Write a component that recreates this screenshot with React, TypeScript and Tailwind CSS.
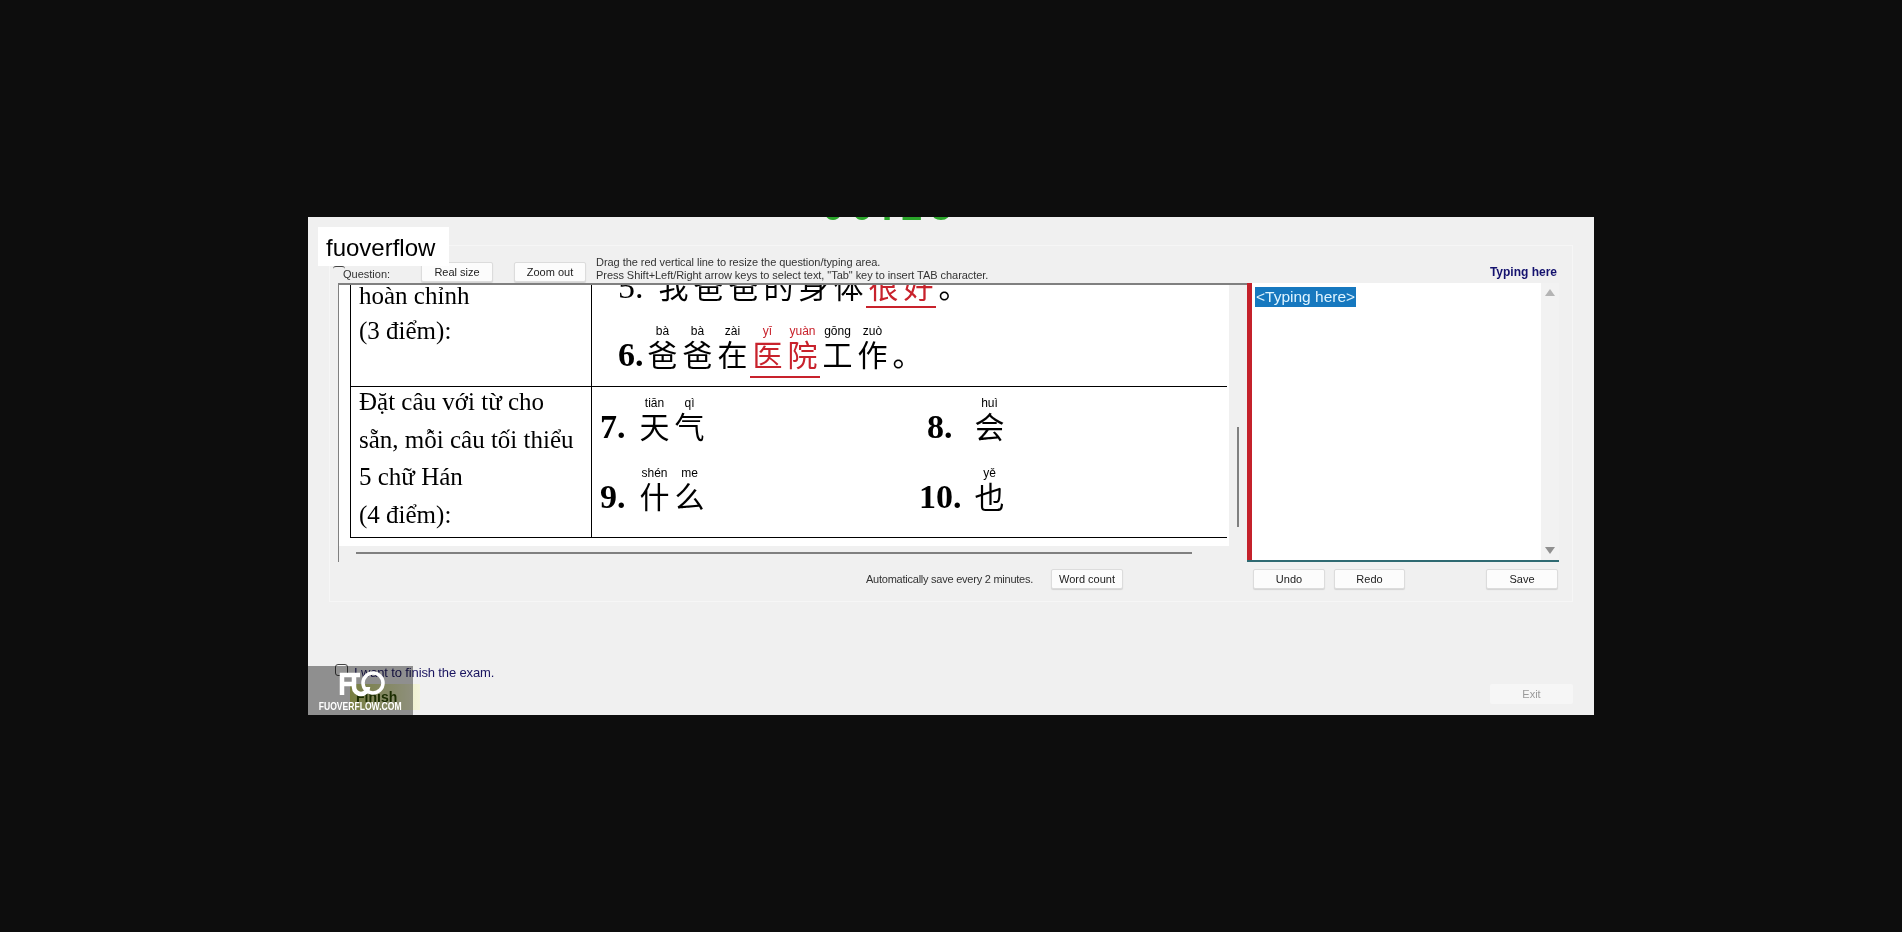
import React from 'react';

const CJK = '"Liberation Serif","Noto Sans CJK SC",serif';

// one hanzi with its pinyin above it
const Han = ({ py, ch, red }: { py?: string; ch: string; red?: boolean }) => (
  <div className={`flex w-[35px] flex-col items-center ${red ? 'text-[#c8222c]' : 'text-black'}`}>
    {py !== undefined && (
      <span className="h-[14px] text-[12px] leading-[14px] font-['Liberation_Sans',sans-serif] whitespace-nowrap">{py}</span>
    )}
    <span className="h-[36px] text-[30px] leading-[30px] font-['Noto_Sans_CJK_SC',serif]">{ch}</span>
  </div>
);

const Num = ({ children, className }: { children: React.ReactNode; className?: string }) => (
  <span className={`h-[36px] text-[34px] leading-[34px] text-black ${className ?? 'font-bold'}`}>{children}</span>
);

const Btn = ({ children, className }: { children: React.ReactNode; className?: string }) => (
  <button className={`h-[20px] rounded-[2px] border border-[#dcdcdc] bg-[#fcfcfc] text-[11px] leading-[18px] text-[#222] shadow-[0_1px_1px_rgba(0,0,0,0.12)] ${className ?? ''}`}>
    {children}
  </button>
);

const App = () => {
  return (
    <div className="h-[932px] w-[1902px] overflow-hidden bg-[#0d0d0d] pt-[217px] pl-[308px] font-['Liberation_Sans',sans-serif]">
      <div className="relative h-[498px] w-[1286px] overflow-hidden bg-[#f0f0f0]">
        {/* timer, cut off by the top edge */}
        <div className="flex h-[3px] items-start justify-center overflow-hidden">
          <span className="mt-[-29px] ml-[-120px] text-[38px] leading-[38px] font-bold tracking-[8px] text-[#2aa52a]">00:25</span>
        </div>

        {/* exam group */}
        <div className="mt-[25px] ml-[21px] h-[357px] w-[1244px] border border-[#f6f6f6] pt-[16px]">
          {/* toolbar */}
          <div className="flex h-[21px] items-start pl-[13px] text-[#333]">
            <span className="mt-[5px] w-[78px] text-[11px] leading-[14px]">Question:</span>
            <Btn className="w-[72px]">Real size</Btn>
            <Btn className="ml-[21px] w-[72px]">Zoom out</Btn>
            <div className="mt-[-6px] ml-[10px] text-[11px] leading-[13px] tracking-[-0.05px] whitespace-nowrap">
              <div>Drag the red vertical line to resize the question/typing area.</div>
              <div>Press Shift+Left/Right arrow keys to select text, "Tab" key to insert TAB character.</div>
            </div>
            <span className="mt-[3px] mr-[15px] ml-auto text-[12px] leading-[14px] font-bold text-[#14126e]">Typing here</span>
          </div>

          <div className="ml-[8px] flex h-[279px]">
            {/* question pane */}
            <div className="flex w-[909px] flex-col border-t-2 border-l border-[#808080]">
              <div className="flex h-[261px]">
                <div className="w-[890px] overflow-hidden bg-white pl-[11px]">
                  <div className="w-[877px] border-b border-l border-black font-['Liberation_Serif',serif] text-[25px] text-black">
                    <div className="flex h-[102px] border-b border-black">
                      <div className="mt-[-7px] w-[241px] border-r border-black pl-[8px] leading-[35px]">
                        <div>hoàn chỉnh</div>
                        <div>(3 điểm):</div>
                      </div>
                      <div className="pl-[26px]" style={{ fontFamily: CJK }}>
                        <div className="mt-[-15px] flex items-end">
                          <Num className="w-[38px] font-normal">5.</Num>
                          <Han ch="我" />
                          <Han ch="爸" />
                          <Han ch="爸" />
                          <Han ch="的" />
                          <Han ch="身" />
                          <Han ch="体" />
                          <div className="mb-[-2px] flex border-b-2 border-[#c8222c]">
                            <Han ch="很" red />
                            <Han ch="好" red />
                          </div>
                          <Han ch="。" />
                        </div>
                        <div className="mt-[18px] flex items-end">
                          <Num className="w-[27px] font-bold">6.</Num>
                          <Han py="bà" ch="爸" />
                          <Han py="bà" ch="爸" />
                          <Han py="zài" ch="在" />
                          <div className="mb-[-4px] flex border-b-2 border-[#c8222c] pb-[2px]">
                            <Han py="yī" ch="医" red />
                            <Han py="yuàn" ch="院" red />
                          </div>
                          <Han py="gōng" ch="工" />
                          <Han py="zuò" ch="作" />
                          <Han ch="。" />
                        </div>
                      </div>
                    </div>
                    <div className="flex h-[150px]">
                      <div className="mt-[-4px] w-[241px] border-r border-black pl-[8px] leading-[37.5px] whitespace-nowrap">
                        <div>Đặt câu với từ cho</div>
                        <div>sẵn, mỗi câu tối thiểu</div>
                        <div>5 chữ Hán</div>
                        <div>(4 điểm):</div>
                      </div>
                      <div className="pt-[9px] pl-[8px]" style={{ fontFamily: CJK }}>
                        <div className="flex items-end">
                          <Num className="w-[37px] font-bold">7.</Num>
                          <Han py="tiān" ch="天" />
                          <Han py="qì" ch="气" />
                          <Num className="ml-[220px] w-[45px] font-bold">8.</Num>
                          <Han py="huì" ch="会" />
                        </div>
                        <div className="mt-[20px] flex items-end">
                          <Num className="w-[37px] font-bold">9.</Num>
                          <Han py="shén" ch="什" />
                          <Han py="me" ch="么" />
                          <Num className="ml-[212px] w-[53px] font-bold">10.</Num>
                          <Han py="yě" ch="也" />
                        </div>
                      </div>
                    </div>
                  </div>
                </div>
                {/* vertical scroll thumb */}
                <div className="flex-1 pt-[142px] pl-[8px]">
                  <div className="h-[100px] w-[2px] bg-[#808080]" />
                </div>
              </div>
              {/* horizontal scroll thumb */}
              <div className="mt-[6px] ml-[17px] h-[2px] w-[836px] bg-[#808080]" />
            </div>

            {/* red splitter */}
            <div className="w-[5px] bg-[#c4212b]" />

            {/* typing pane */}
            <div className="flex w-[307px] flex-col">
              <div className="flex h-[277px] bg-white">
                <div className="flex-1 pt-[2px] pl-[3px]">
                  <span className="inline-block h-[20px] bg-[#1678bf] px-[1px] text-[15.5px] leading-[20px] text-[#dff4ff]">&lt;Typing here&gt;</span>
                </div>
                <div className="flex w-[18px] flex-col items-center justify-between bg-[#f2f2f2] pt-[6px] pb-[6px]">
                  <div className="h-0 w-0 border-x-[5px] border-b-[7px] border-x-transparent border-b-[#b4b4b4]" />
                  <div className="h-0 w-0 border-x-[5px] border-t-[7px] border-x-transparent border-t-[#909090]" />
                </div>
              </div>
              <div className="ml-[-5px] h-[2px] w-[312px] bg-[#2f6a72]" />
            </div>
          </div>

          {/* bottom actions */}
          <div className="mt-[7px] flex items-center pl-[536px]">
            <span className="w-[185px] text-[11px] leading-[14px] tracking-[-0.24px] text-[#333] whitespace-nowrap">Automatically save every 2 minutes.</span>
            <Btn className="w-[72px]">Word count</Btn>
            <Btn className="ml-[130px] w-[72px]">Undo</Btn>
            <Btn className="ml-[9px] w-[71px]">Redo</Btn>
            <Btn className="ml-[81px] w-[72px]">Save</Btn>
          </div>
        </div>

        {/* finish */}
        <div className="mt-[62px] flex items-start pl-[27px]">
          <span className="h-[12px] w-[13px] rounded-[3px] border border-[#444] bg-[#f4f4f4]" />
          <span className="mt-[1px] ml-[6px] text-[13px] leading-[16px] tracking-[-0.14px] text-[#1a1560]">I want to finish the exam.</span>
        </div>
        <div className="mt-[3px] flex items-start justify-between pr-[21px] pl-[42px]">
          <div className="h-[26px] w-[70px] bg-gradient-to-r from-[#c9d46a] to-[#f4f4dc] pt-[5px] pl-[6px] text-[14px] leading-[16px] font-bold text-[#2c4a00]">Finish</div>
          <button className="h-[20px] w-[83px] rounded-[2px] bg-[#f6f6f6] text-[11px] leading-[20px] text-[#9a9a9a]">Exit</button>
        </div>

        {/* checkbox edge that shows just under the watermark */}
        <span className="absolute top-[49px] left-[25px] h-[3px] w-[12px] rounded-t-full border-t border-[#444]" />

        {/* watermarks on top of the capture */}
        <div className="absolute top-[10px] left-[10px] h-[39px] w-[131px] bg-white pl-[8px] text-[24px] leading-[42px] text-black">fuoverflow</div>
        <div className="absolute bottom-0 left-0 flex h-[49px] w-[105px] flex-col items-center overflow-hidden">
          <div className="absolute inset-0 bg-[#989898] mix-blend-multiply" />
          <svg className="relative" width="105" height="34" viewBox="0 0 105 34" fill="none" stroke="white" strokeWidth="4.5">
            <path d="M34 29 V9 H52 M34 18 H45" />
            <path d="M46 9 V21 a7 7 0 0 0 14 0" />
            <circle cx="65" cy="17" r="10" strokeWidth="3.5" />
          </svg>
          <span className="relative scale-x-[0.78] text-[11px] leading-[12px] font-bold text-white whitespace-nowrap">FUOVERFLOW.COM</span>
        </div>
      </div>
    </div>
  );
};

export default App;
